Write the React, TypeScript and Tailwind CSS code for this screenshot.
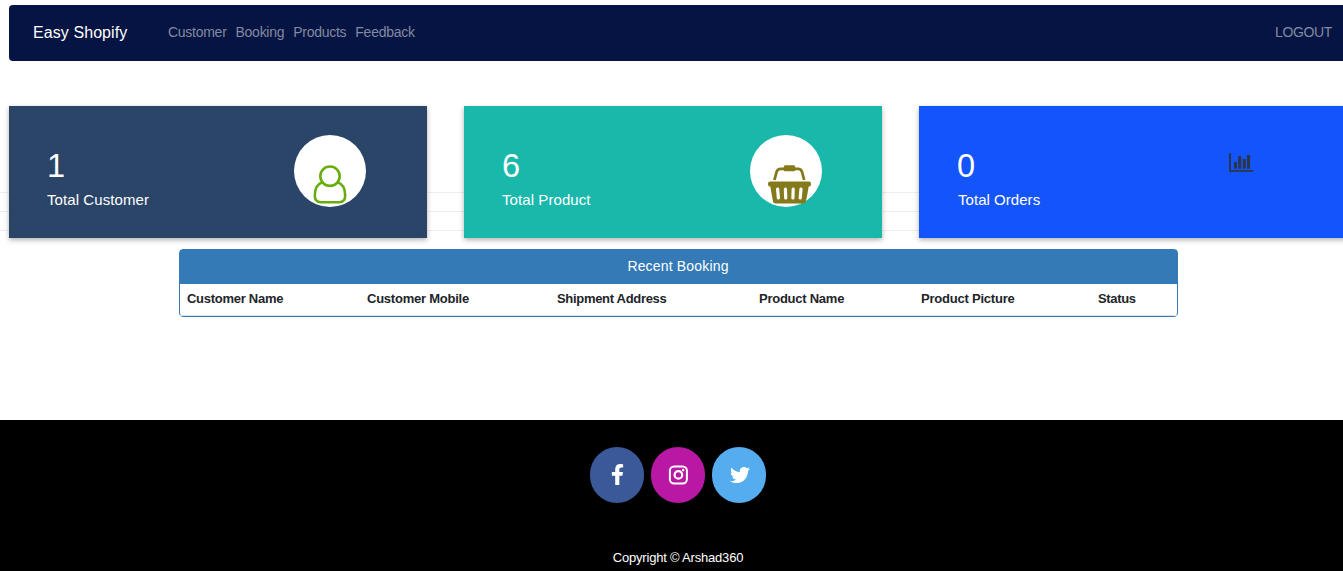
import React from "react";
import { FaFacebookF, FaTwitter } from "react-icons/fa";

const navLinks = ["Customer", "Booking", "Products", "Feedback"];

function UserIcon() {
  return (
    <svg width="34" height="40" viewBox="0 0 34 40" fill="none" stroke="#67ad0b" strokeWidth="2.6">
      <circle cx="17" cy="11.2" r="9.7" />
      <path d="M9.6 17.2C4.2 18.8 1.8 24.4 1.8 30.6C1.8 34.8 4 37.2 7.6 37.2H26.4C30 37.2 32.2 34.8 32.2 30.6C32.2 24.4 29.8 18.8 24.4 17.2" />
    </svg>
  );
}

function BasketIcon() {
  return (
    <svg width="43" height="39" viewBox="0 0 43 39" fill="none">
      <path d="M6.4 15L8.6 6.8Q9.5 3.8 12.6 3.8H30Q33.1 3.8 34 6.8L36.2 15" stroke="#847a1c" strokeWidth="2.8" />
      <rect x="15.7" y="0.3" width="11.6" height="6" rx="1.6" fill="#847a1c" />
      <rect x="0" y="16.6" width="43" height="5" rx="2" fill="#847a1c" />
      <path d="M2 20H41L38 36.4Q37.5 38.4 35.4 38.4H7.6Q5.5 38.4 5 36.4Z" fill="#847a1c" />
      <path d="M9.6 24.2L10.4 33M17.4 24.2L17.7 33M25.2 24.2L24.9 33M33 24.2L32.2 33" stroke="#fff" strokeWidth="3.2" strokeLinecap="round" />
    </svg>
  );
}

function ChartIcon() {
  return (
    <svg className="mt-[47px] ml-[23px]" width="25" height="19" viewBox="0 0 25 19" fill="#2b3547">
      <path d="M0 0.3H1.9V17H24.2V18.7H0ZM4.9 9H8V15.8H4.9ZM9.2 3H12.2V15.8H9.2ZM13.7 6H16.8V15.8H13.7ZM18 2H21.1V15.8H18Z" />
    </svg>
  );
}

function InstagramIcon() {
  return (
    <svg className="shrink-0" width="20" height="20" viewBox="0 0 20 20" fill="none" stroke="currentColor" strokeWidth="2">
      <rect x="1.9" y="1.4" width="17" height="17" rx="4.2" />
      <circle cx="10.4" cy="9.9" r="3.8" strokeWidth="2.2" />
      <circle cx="15.1" cy="5.1" r="1.3" fill="currentColor" stroke="none" />
    </svg>
  );
}

interface StatCardProps {
  value: number;
  label: string;
  color: string;
  children: React.ReactNode;
}

function StatCard({ value, label, color, children }: StatCardProps) {
  return (
    <section className={`flex h-[132px] w-[418px] shrink-0 justify-between pl-[38px] shadow-[0_2px_5px_rgba(0,0,0,0.3)] ${color}`}>
      <div className="pt-[40px] text-white">
        <div className="text-[32.5px] leading-[40px]">{value}</div>
        <div className="mt-[4px] text-[15px] leading-[20px] tracking-[0.08px]">{label}</div>
      </div>
      <div className="w-[133px]">{children}</div>
    </section>
  );
}

const columns = [
  { label: "Customer Name", style: "w-[180px] tracking-[-0.27px]" },
  { label: "Customer Mobile", style: "w-[190px] tracking-[-0.23px]" },
  { label: "Shipment Address", style: "w-[202px] tracking-[-0.31px]" },
  { label: "Product Name", style: "w-[162px] tracking-[-0.25px]" },
  { label: "Product Picture", style: "w-[177px] tracking-[-0.22px]" },
  { label: "Status", style: "w-[86px] tracking-[-0.35px]" },
];

const socials = [
  { name: "Facebook", color: "bg-[#3b5998]", icon: <FaFacebookF size={21} className="-mt-[2px]" /> },
  { name: "Instagram", color: "bg-[#b818a3]", icon: <InstagramIcon /> },
  { name: "Twitter", color: "bg-[#55acee]", icon: <FaTwitter size={20} className="-mt-px ml-px" /> },
];

export default function App() {
  return (
    <div className="flex h-[571px] w-full flex-col overflow-hidden bg-white pt-[5px] font-['Liberation_Sans',Arial,sans-serif]">
      <nav className="ml-[9px] flex h-[56px] shrink-0 items-center rounded-l-[4px] bg-[#051442] pr-[11px] pl-[24px]">
        <a href="#" className="w-[135px] text-[16px] leading-[24px] tracking-[0.08px] text-white">Easy Shopify</a>
        <div className="flex flex-1 gap-[9px] pb-[2px] text-[14px] leading-[20px] tracking-[-0.27px] text-[#828aa1]">
          {navLinks.map((link) => (
            <a key={link} href="#">{link}</a>
          ))}
        </div>
        <a href="#" className="pb-[2px] text-[14px] leading-[20px] tracking-[-0.35px] text-[#828aa1]">LOGOUT</a>
      </nav>

      <main className="flex h-[359px] shrink-0 flex-col pt-[45px]">
        <div className="grid h-[132px] shrink-0 grid-cols-1 grid-rows-1">
          <div className="col-start-1 row-start-1 flex flex-col gap-[18px] pt-[86px]">
            <hr className="border-[#eeeeee]" />
            <hr className="border-[#eeeeee]" />
            <hr className="border-[#eeeeee]" />
          </div>
          <div className="z-10 col-start-1 row-start-1 flex min-w-0 gap-[37px] pl-[9px]">
            <StatCard value={1} label="Total Customer" color="bg-[#2b4569]">
              <div className="mt-[29px] flex h-[72px] w-[72px] justify-center rounded-full bg-white pt-[30px]">
                <UserIcon />
              </div>
            </StatCard>
            <StatCard value={6} label="Total Product" color="bg-[#1ab8ab]">
              <div className="mt-[29px] ml-px flex h-[72px] w-[72px] justify-center rounded-full bg-white pt-[30px] pl-[6px]">
                <BasketIcon />
              </div>
            </StatCard>
            <section className="flex h-[132px] w-[436px] shrink-0 bg-[#1455fb] pl-[39px] shadow-[0_2px_5px_rgba(0,0,0,0.3)]">
              <div className="w-[248px] pt-[40px] text-white">
                <div className="-ml-px text-[32.5px] leading-[40px]">0</div>
                <div className="mt-[4px] text-[15px] leading-[20px] tracking-[0.04px]">Total Orders</div>
              </div>
              <ChartIcon />
            </section>
          </div>
        </div>

        <section className="mt-[11px] ml-[179px] h-[68px] w-[999px] rounded-[4px] border border-[#337ab7]">
          <h2 className="h-[34px] bg-[#337ab7] pt-[6px] pr-px text-center text-[14px] leading-[20px] tracking-[0.17px] text-white">Recent Booking</h2>
          <table className="w-full table-fixed border-collapse border-b border-[#dee2e6] text-left text-[13px] text-[#212529]">
            <thead>
              <tr className="h-[31px]">
                {columns.map((column) => (
                  <th key={column.label} className={`${column.style} p-0 pl-[7px] align-middle leading-[18px] font-bold`}>{column.label}</th>
                ))}
              </tr>
            </thead>
          </table>
        </section>
      </main>

      <footer className="flex flex-1 flex-col items-center bg-black pt-[27px] pl-[13px]">
        <div className="flex gap-[7px]">
          {socials.map(({ name, color, icon }) => (
            <a key={name} href="#" aria-label={name} className={`flex h-[56px] w-[54px] items-center justify-center rounded-full text-white ${color}`}>
              {icon}
            </a>
          ))}
        </div>
        <p className="mt-[46px] text-[13px] leading-[18px] tracking-[-0.2px] text-white">Copyright © Arshad360</p>
      </footer>
    </div>
  );
}
